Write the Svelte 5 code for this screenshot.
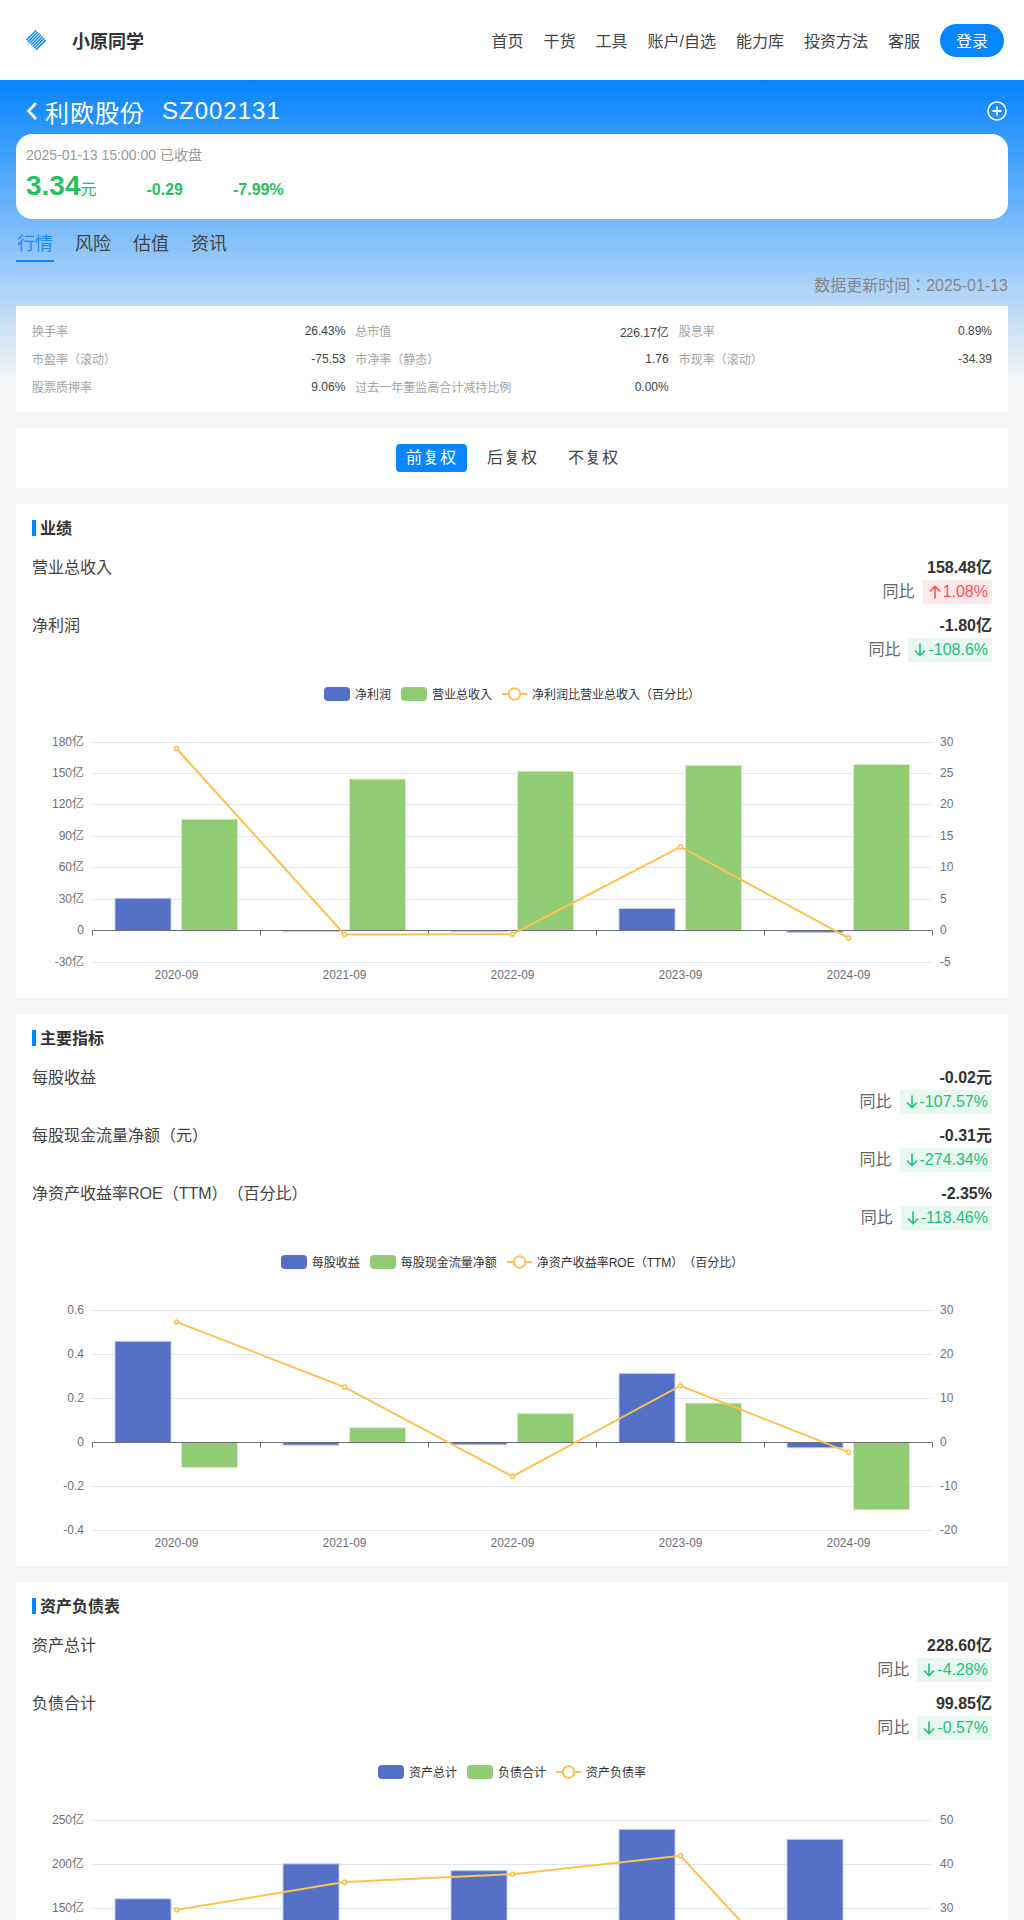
<script>
  const nav = ['首页', '干货', '工具', '账户/自选', '能力库', '投资方法', '客服'];
  const tabs = ['行情', '风险', '估值', '资讯'];
  const fuquan = ['前复权', '后复权', '不复权'];
  const years = ['2020-09', '2021-09', '2022-09', '2023-09', '2024-09'];

  const stats = [
    ['换手率', '26.43%'], ['总市值', '226.17亿'], ['股息率', '0.89%'],
    ['市盈率（滚动）', '-75.53'], ['市净率（静态）', '1.76'], ['市现率（滚动）', '-34.39'],
    ['股票质押率', '9.06%'], ['过去一年董监高合计减持比例', '0.00%']
  ];

  const sections = [
    {
      title: '业绩',
      rows: [
        { name: '营业总收入', value: '158.48亿', change: '1.08%', up: true },
        { name: '净利润', value: '-1.80亿', change: '-108.6%' }
      ],
      legend: ['净利润', '营业总收入', '净利润比营业总收入（百分比）'],
      chart: {
        left: ['180亿', '150亿', '120亿', '90亿', '60亿', '30亿', '0', '-30亿'],
        right: ['30', '25', '20', '15', '10', '5', '0', '-5'],
        zero: 6,
        leftStep: 30,
        rightStep: 5,
        blue: [30.8, -1, -1, 21, -1.8],
        green: [106.2, 144.5, 152, 157.5, 158.48],
        line: [28.95, -0.64, -0.59, 13.3, -1.18]
      }
    },
    {
      title: '主要指标',
      rows: [
        { name: '每股收益', value: '-0.02元', change: '-107.57%' },
        { name: '每股现金流量净额（元）', value: '-0.31元', change: '-274.34%' },
        { name: '净资产收益率ROE（TTM）（百分比）', value: '-2.35%', change: '-118.46%' }
      ],
      legend: ['每股收益', '每股现金流量净额', '净资产收益率ROE（TTM）（百分比）'],
      chart: {
        left: ['0.6', '0.4', '0.2', '0', '-0.2', '-0.4'],
        right: ['30', '20', '10', '0', '-10', '-20'],
        zero: 3,
        leftStep: 0.2,
        rightStep: 10,
        blue: [0.46, -0.012, -0.01, 0.314, -0.024],
        green: [-0.114, 0.067, 0.132, 0.179, -0.306],
        line: [27.4, 12.6, -7.7, 12.9, -2.2]
      }
    },
    {
      title: '资产负债表',
      rows: [
        { name: '资产总计', value: '228.60亿', change: '-4.28%' },
        { name: '负债合计', value: '99.85亿', change: '-0.57%' }
      ],
      legend: ['资产总计', '负债合计', '资产负债率'],
      chart: {
        left: ['250亿', '200亿', '150亿', '100亿', '50亿', '0'],
        right: ['50', '40', '30', '20', '10', '0'],
        zero: 5,
        leftStep: 50,
        rightStep: 10,
        blue: [161, 200.8, 193, 240, 228.6],
        green: [48, 72, 73, 100, 99.85],
        line: [29.7, 36, 37.8, 42, 0.4]
      }
    }
  ];

  // chart geometry, same for all three (svg is 992 wide, 297 high)
  const gridTop = 41;
  const gridH = 220;
  const x0 = 76.5;
  const x1 = 916.5;
  const step = 168;
  const barW = 56;

  const pitch = (c) => gridH / (c.left.length - 1);
  const gridY = (c, i) => Math.floor(gridTop + i * pitch(c)) + 0.5;
  const zeroY = (c) => gridY(c, c.zero);
  const valY = (c, v, unit) => zeroY(c) - (v / unit) * pitch(c);
  const linePts = (c) =>
    c.line.map((v, i) => `${x0 + step * (i + 0.5)},${valY(c, v, c.rightStep)}`).join(' ');
</script>

{#snippet barRect(c, v, x, cls)}
  {@const y = valY(c, v, c.leftStep)}
  <rect class={cls} x={x} y={Math.min(y, zeroY(c))} width={barW} height={Math.abs(y - zeroY(c))} />
{/snippet}

{#snippet chart(c)}
  <svg class="chart" width="992" height="297" viewBox="0 0 992 297">
    {#each c.left as label, i}
      {#if i !== c.zero}
        <line class="grid" x1={x0} x2={x1} y1={gridY(c, i)} y2={gridY(c, i)} />
      {/if}
      <text class="tick" x="68" y={gridY(c, i) + 3} text-anchor="end">{label}</text>
      <text class="tick" x="924" y={gridY(c, i) + 3}>{c.right[i]}</text>
    {/each}
    {#each years as _, i}
      {@render barRect(c, c.blue[i], x0 + step * i + 22.5, 'blue')}
      {@render barRect(c, c.green[i], x0 + step * i + 89, 'green')}
    {/each}
    <line class="axis" x1={x0} x2={x1} y1={zeroY(c)} y2={zeroY(c)} />
    {#each [0, 1, 2, 3, 4, 5] as i}
      <line class="axis" x1={x0 + step * i} x2={x0 + step * i} y1={zeroY(c)} y2={zeroY(c) + 5} />
    {/each}
    <polyline class="trend" points={linePts(c)} />
    {#each c.line as v, i}
      <circle class="dot" cx={x0 + step * (i + 0.5)} cy={valY(c, v, c.rightStep)} r="2" />
    {/each}
    {#each years as year, i}
      <text class="tick" x={x0 + step * (i + 0.5)} y={gridTop + gridH + 17} text-anchor="middle">{year}</text>
    {/each}
  </svg>
{/snippet}

<div class="page">
  <header class="top">
    <svg class="logo" width="22" height="24" viewBox="0 0 22 24" fill="none" stroke="#1a8af0" stroke-width="1.5">
      <path d="M1.25 12.25 11.25 2.25M2.85 13.85 12.85 3.85M4.45 15.45 14.45 5.45M6.05 17.05 16.05 7.05M7.65 18.65 17.65 8.65M9.25 20.25 19.25 10.25M10.85 21.85 20.85 11.85" />
    </svg>
    <div class="brand">小原同学</div>
    <nav class="nav">
      {#each nav as item}
        <span>{item}</span>
      {/each}
      <button class="login">登录</button>
    </nav>
  </header>

  <main class="main">
    <div class="stock">
      <svg class="back" width="12" height="20" viewBox="0 0 12 20" fill="none" stroke="#fff" stroke-width="2.6">
        <path d="M10 2 2.5 10 10 18" />
      </svg>
      <span class="stock__name">利欧股份</span>
      <span class="stock__code">SZ002131</span>
      <svg class="add" width="20" height="20" viewBox="0 0 20 20" fill="none" stroke="#fff" stroke-width="1.6">
        <circle cx="10" cy="10" r="9" />
        <path d="M10 5.5v9M5.5 10h9" stroke-width="2" />
      </svg>
    </div>

    <section class="quote">
      <div class="quote__time">2025-01-13 15:00:00 已收盘</div>
      <div class="quote__nums">
        <span><b class="price">3.34</b><span class="unit">元</span></span>
        <b class="delta">-0.29</b>
        <b class="delta">-7.99%</b>
      </div>
    </section>

    <div class="tabs">
      {#each tabs as tab, i}
        <span class="tab" class:tab--on={i === 0}>{tab}</span>
      {/each}
    </div>

    <div class="updated">数据更新时间：2025-01-13</div>

    <section class="stats">
      {#each stats as [k, v]}
        <div class="stat">
          <span class="k">{k}</span>
          <span class="v">{v}</span>
        </div>
      {/each}
    </section>

    <section class="fq">
      {#each fuquan as f, i}
        <span class="fq__btn" class:fq__btn--on={i === 0}>{f}</span>
      {/each}
    </section>

    {#each sections as s}
      <section class="block">
        <h2 class="block__title">{s.title}</h2>
        <div class="rows">
          {#each s.rows as r}
            <div class="row">
              <span class="row__name">{r.name}</span>
              <div class="row__right">
                <b class="row__value">{r.value}</b>
                <div class="row__yoy">
                  <span>同比</span>
                  <span class="pill" class:pill--up={r.up}>
                    <svg width="12" height="14" viewBox="0 0 12 14" fill="none" stroke="currentColor" stroke-width="1.6">
                      {#if r.up}
                        <path d="M6 13.5V1.5M1 6.5l5-5 5 5" />
                      {:else}
                        <path d="M6 .5v12M1 7.5l5 5 5-5" />
                      {/if}
                    </svg>
                    {r.change}
                  </span>
                </div>
              </div>
            </div>
          {/each}
        </div>
        <div class="legend">
          <span class="legend__item"><i class="swatch swatch--blue"></i><span class="legend__text">{s.legend[0]}</span></span>
          <span class="legend__item"><i class="swatch swatch--green"></i><span class="legend__text">{s.legend[1]}</span></span>
          <span class="legend__item">
            <svg width="25" height="14" viewBox="0 0 25 14" fill="none" stroke="#fdc14f" stroke-width="2">
              <path d="M0 7h6M19 7h6" />
              <circle cx="12.5" cy="7" r="5.8" />
            </svg>
            <span class="legend__text">{s.legend[2]}</span>
          </span>
        </div>
        {@render chart(s.chart)}
      </section>
    {/each}
  </main>
</div>

<style>
  :global(body) {
    background: #f5f5f5;
    font-family: "Liberation Sans", "Noto Sans CJK JP", sans-serif;
    text-spacing-trim: space-all;
  }

  .page {
    height: 1920px;
    overflow: hidden;
  }

  .top {
    height: 80px;
    background: #fff;
    display: flex;
    align-items: center;
    padding: 0 20px 0 25px;
    box-sizing: border-box;
  }

  .brand {
    margin-left: 25px;
    font-size: 18px;
    font-weight: 700;
    color: #333;
  }

  .nav {
    margin-left: auto;
    display: flex;
    align-items: center;
    gap: 20px;
    font-size: 16px;
    color: #444;
  }

  .login {
    width: 64px;
    height: 33px;
    border: 0;
    border-radius: 17px;
    background: #0586fd;
    color: #fff;
    font: inherit;
    padding: 0;
  }

  .main {
    padding: 0 16px 16px;
    background: linear-gradient(#0584fd, #f5f5f5) no-repeat;
    background-size: 100% 300px;
  }

  .stock {
    height: 54px;
    padding: 11px 1px 3px 10px;
    box-sizing: border-box;
    display: flex;
    align-items: center;
    color: #fff;
    font-size: 24px;
    letter-spacing: 1px;
  }

  .back {
    margin-right: 7px;
  }

  .stock__code {
    margin-left: 17px;
  }

  .add {
    margin-left: auto;
  }

  .quote {
    height: 85px;
    box-sizing: border-box;
    background: #fff;
    border-radius: 16px;
    padding: 11px 10px;
  }

  .quote__time {
    font-size: 14px;
    line-height: 20px;
    color: #999;
  }

  .quote__nums {
    margin-top: 5px;
    display: flex;
    align-items: baseline;
    gap: 50px;
    color: #22c25f;
  }

  .price {
    font-size: 28px;
  }

  .unit {
    font-size: 16px;
  }

  .delta {
    font-size: 16px;
  }

  .tabs {
    margin-top: 10px;
    display: flex;
    gap: 20px;
  }

  .tab {
    width: 38px;
    text-align: center;
    font-size: 18px;
    line-height: 30px;
    padding-bottom: 1px;
    border-bottom: 2px solid transparent;
    color: #444;
  }

  .tab--on {
    color: #1a8cf5;
    border-bottom-color: #0586fd;
  }

  .updated {
    margin: 12px 0 8px;
    text-align: right;
    font-size: 16px;
    line-height: 24px;
    color: #888;
  }

  .stats {
    background: #fff;
    padding: 11px 16px;
    display: grid;
    grid-template-columns: repeat(3, 1fr);
    column-gap: 10px;
    font-size: 12px;
  }

  .stat {
    height: 28px;
    display: flex;
    align-items: center;
    justify-content: space-between;
  }

  .k {
    margin-bottom: 2px;
    color: #a3a3a3;
  }

  .v {
    color: #444;
  }

  .fq {
    margin-top: 16px;
    height: 60px;
    padding-left: 1px;
    background: #fff;
    display: flex;
    align-items: center;
    justify-content: center;
    gap: 10px;
  }

  .fq__btn {
    padding: 0 10px;
    line-height: 28px;
    border-radius: 4px;
    font-size: 16px;
    letter-spacing: 1px;
    color: #444;
  }

  .fq__btn--on {
    background: #0586fd;
    color: #fff;
  }

  .block {
    margin-top: 16px;
    background: #fff;
    padding-top: 16px;
  }

  .block__title {
    margin: 0 16px;
    height: 16px;
    box-sizing: border-box;
    padding: 2px 0 0 4px;
    border-left: 4px solid #0586fd;
    font-size: 16px;
    line-height: 14px;
    font-weight: 700;
    color: #333;
  }

  .rows {
    margin: 20px 16px 0;
    display: flex;
    flex-direction: column;
    gap: 10px;
  }

  .row {
    display: flex;
    justify-content: space-between;
    font-size: 16px;
    line-height: 24px;
  }

  .row__name {
    color: #444;
  }

  .row__right {
    display: flex;
    flex-direction: column;
    align-items: flex-end;
  }

  .row__value {
    color: #333;
  }

  .row__yoy {
    display: flex;
    gap: 8px;
    color: #666;
  }

  .pill {
    display: flex;
    align-items: center;
    gap: 2px;
    padding: 0 4px 0 6px;
    background: #e8f7f0;
    color: #1fc27a;
  }

  .pill--up {
    background: #ffe9e9;
    color: #ff4d57;
  }

  .legend {
    margin-top: 25px;
    height: 14px;
    display: flex;
    justify-content: center;
    gap: 10px;
    font-size: 12px;
    line-height: 14px;
    color: #333;
  }

  .legend__item {
    display: flex;
    align-items: center;
    gap: 5px;
  }

  .legend__text {
    padding-top: 2px;
  }

  .swatch {
    width: 26px;
    height: 14px;
    border-radius: 4px;
  }

  .swatch--blue {
    background: #5470c6;
  }

  .swatch--green {
    background: #91cc75;
  }

  .chart {
    display: block;
  }

  .grid {
    stroke: #e0e6f1;
    stroke-width: 1;
  }

  .axis {
    stroke: #6e7079;
    stroke-width: 1;
  }

  .tick {
    font-size: 12px;
    fill: #6e7079;
  }

  .blue {
    fill: #5470c6;
    stroke: #c3cdec;
    stroke-width: 1;
  }

  .green {
    fill: #91cc75;
    stroke: #d6ecca;
    stroke-width: 1;
  }

  .trend {
    fill: none;
    stroke: #fdc14f;
    stroke-width: 2;
  }

  .dot {
    fill: #fff;
    stroke: #fdc14f;
    stroke-width: 1.6;
  }
</style>
